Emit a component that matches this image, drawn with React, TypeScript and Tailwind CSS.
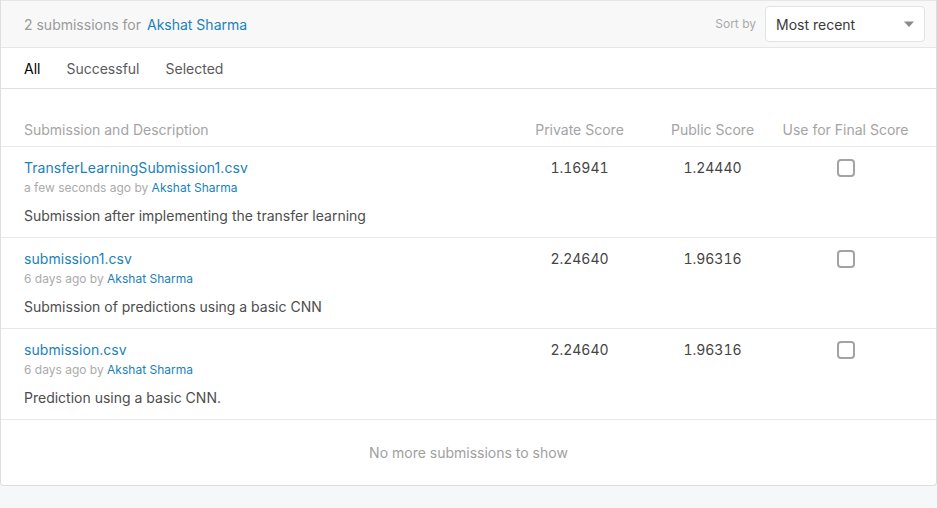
const rows = [
  {
    file: 'TransferLearningSubmission1.csv',
    when: 'a few seconds ago',
    desc: 'Submission after implementing the transfer learning',
    priv: '1.16941',
    pub: '1.24440',
  },
  {
    file: 'submission1.csv',
    when: '6 days ago',
    desc: 'Submission of predictions using a basic CNN',
    priv: '2.24640',
    pub: '1.96316',
  },
  {
    file: 'submission.csv',
    when: '6 days ago',
    desc: 'Prediction using a basic CNN.',
    priv: '2.24640',
    pub: '1.96316',
  },
];

export default function App() {
  return (
    <div className="min-h-[508px] w-[937px] bg-[#f5f7f8] font-['Inter',sans-serif] text-[14px] text-[#4a4a4a]">
      <div className="border-x border-b border-[#dedede] rounded-b-[4px] bg-white">
        {/* header */}
        <div className="h-[48px] flex items-center justify-between border-t border-b border-[#e6e6e6] bg-[#f8f8f8] pl-[23px] pr-[11px]">
          <div className="flex items-center gap-[6px]">
            <span className="text-[#9a9a9a]">2 submissions for</span>
            <span className="text-[#1a82b8]">Akshat Sharma</span>
          </div>
          <div className="flex items-center gap-[9px]">
            <span className="text-[12px] text-[#aaaaaa]">Sort by</span>
            <div className="w-[160px] h-[36px] flex items-center justify-between rounded-[4px] border border-[#e3e3e3] bg-white pl-[10px] pr-[8px] text-[#3a3a3a]">
              <span>Most recent</span>
              <svg width="12" height="7" viewBox="0 0 12 7" className="mr-[1px]">
                <path d="M1 0.5 H11 L6 6 Z" fill="#8a8a8a" />
              </svg>
            </div>
          </div>
        </div>

        {/* tabs */}
        <div className="h-[41px] flex items-center gap-[26px] pl-[23px] border-b border-[#e0e0e0]">
          <span className="text-black">All</span>
          <span className="text-[#5a5a5a]">Successful</span>
          <span className="text-[#5a5a5a]">Selected</span>
        </div>

        {/* table head */}
        <div className="flex items-end pt-[31px] pb-[6px] pl-[23px] pr-6 border-b border-[#ebebeb] text-[#a4a4a4] leading-5">
          <div className="flex-1">Submission and Description</div>
          <div className="w-[133px] text-center">Private Score</div>
          <div className="w-[133px] text-center">Public Score</div>
          <div className="w-[133px] text-center">Use for Final Score</div>
        </div>

        {rows.map((r, i) => (
          <div key={i} className="flex pl-[23px] pr-6 pt-[11px] pb-[11px] border-b border-[#e8e8e8]">
            <div className="flex-1 flex flex-col">
              <span className="leading-5 text-[#1a82b8] tracking-[0.05px]">{r.file}</span>
              <span className="mt-[2px] text-[12px] leading-4 text-[#ababab]">
                {r.when} by <span className="text-[#1a82b8]">Akshat Sharma</span>
              </span>
              <span className="mt-[10px] leading-5 text-[#4d4d4d]">{r.desc}</span>
            </div>
            <div className="w-[133px] text-center leading-5 text-[#444] tabular-nums">{r.priv}</div>
            <div className="w-[133px] text-center leading-5 text-[#444] tabular-nums">{r.pub}</div>
            <div className="w-[133px] flex justify-center pt-[1px]">
              <div className="w-[18px] h-[18px] rounded-[4px] border-2 border-[#a3a3a3] bg-white" />
            </div>
          </div>
        ))}

        <div className="h-[65px] flex items-center justify-center text-[#a0a0a0]">
          No more submissions to show
        </div>
      </div>
    </div>
  );
}
